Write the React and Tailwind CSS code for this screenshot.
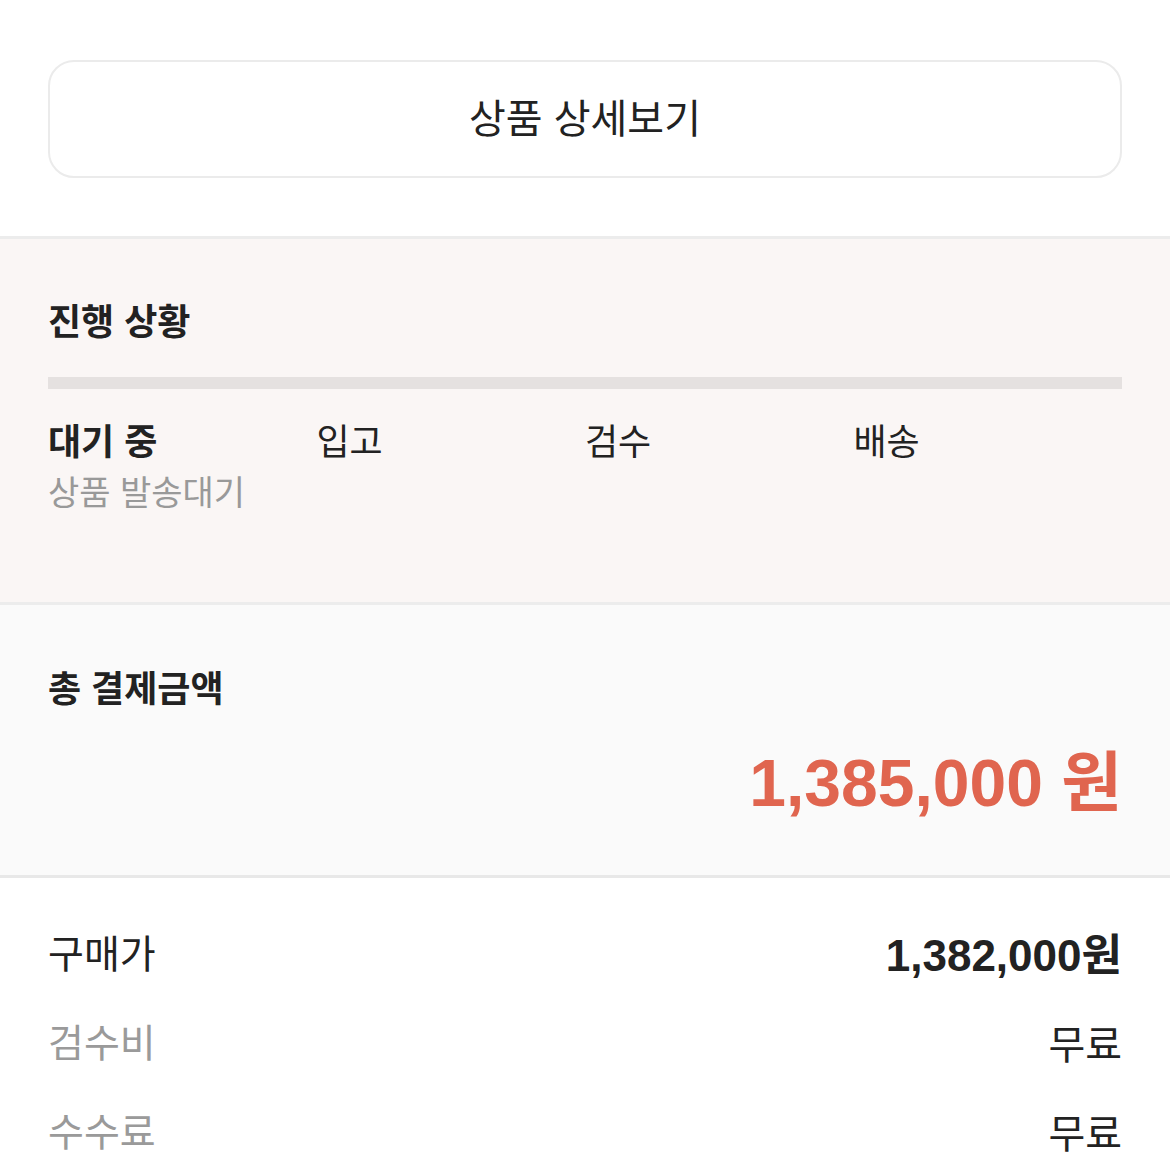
import React from "react";

const font = "font-['Liberation_Sans','Noto_Sans_CJK_KR',sans-serif]";

const steps = [
  { label: "대기 중", sub: "상품 발송대기", active: true },
  { label: "입고" },
  { label: "검수" },
  { label: "배송" },
];

const fees = [
  { label: "구매가", value: "1,382,000원", strong: true },
  { label: "검수비", value: "무료" },
  { label: "수수료", value: "무료" },
];

function App() {
  return (
    <div className={`w-[1170px] bg-white text-[#222] ${font}`}>
      {/* detail button */}
      <section className="px-12 pt-[60px] pb-[58px] border-b-[3px] border-[#ececec]">
        <button className="w-full h-[118px] rounded-[26px] border-2 border-[#ebebeb] bg-white text-[40px] text-[#222] flex items-center justify-center">
          상품 상세보기
        </button>
      </section>

      {/* progress */}
      <section className="bg-[#faf6f5] px-12 pt-[60px] pb-[86px] border-b-[3px] border-[#ececec]">
        <h2 className="text-[36px] leading-[48px] font-bold">진행 상황</h2>
        <div className="mt-[30px] h-3 bg-[#e5e1e0]" />
        <div className="mt-[31px] grid grid-cols-4">
          {steps.map((s) => (
            <div key={s.label}>
              <div className={`text-[36px] leading-[46px] ${s.active ? "font-bold" : ""} text-[#222]`}>
                {s.label}
              </div>
              {s.sub && (
                <div className="mt-1 text-[34px] leading-[46px] text-[#999]">{s.sub}</div>
              )}
            </div>
          ))}
        </div>
      </section>

      {/* total */}
      <section className="bg-[#fafafa] px-12 pt-[61px] pb-[52px] border-b-[3px] border-[#e8e8e8]">
        <h2 className="text-[36px] leading-[48px] font-bold">총 결제금액</h2>
        <div className="mt-[29px] text-right text-[66px] leading-[80px] font-bold text-[#e0654f]">
          1,385,000 원
        </div>
      </section>

      {/* breakdown */}
      <section className="px-12 pt-[33px]">
        {fees.map((f) => (
          <div key={f.label} className="h-[89px] flex items-center justify-between">
            <span className={`text-[39px] ${f.strong ? "text-[#222]" : "text-[#9a9a9a]"}`}>{f.label}</span>
            <span className={`${f.strong ? "text-[44px] font-semibold" : "text-[40px]"} text-[#222]`}>
              {f.value}
            </span>
          </div>
        ))}
      </section>
    </div>
  );
}

export default App;
